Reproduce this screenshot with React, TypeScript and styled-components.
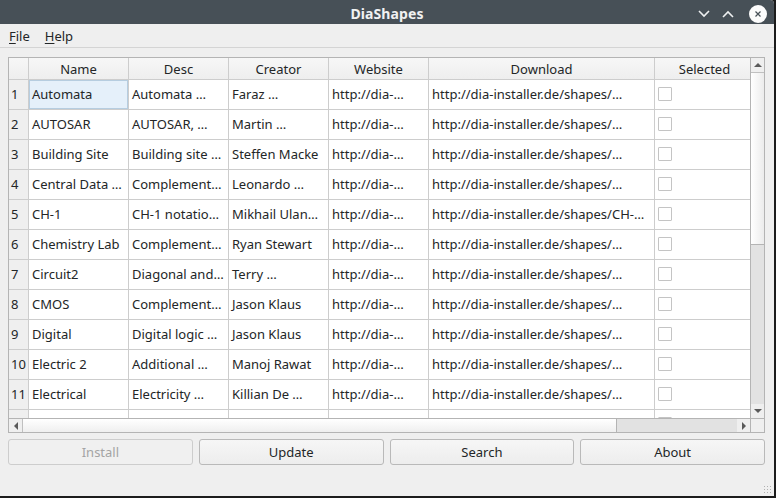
import React from "react";
import styled, { createGlobalStyle } from "styled-components";

const Global = createGlobalStyle`
  html, body { margin: 0; padding: 0; background: #1b1b1b; }
  body { font-family: "Noto Sans", "Open Sans", sans-serif; }
  * { box-sizing: border-box; }
`;

const Screen = styled.div`
  width: 776px;
  height: 498px;
  background: #1c1c1c;
  overflow: hidden;
`;

const Window = styled.div`
  width: 774px;
  height: 496px;
  background: #efefef;
  display: flex;
  flex-direction: column;
  border-top-right-radius: 4px;
  overflow: hidden;
  position: relative;
`;

const TitleBar = styled.div`
  height: 24px;
  flex: none;
  background: #475057;
  display: grid;
  grid-template-columns: 1fr auto 1fr;
  align-items: center;
  padding-top: 3px;
  color: #f0f1f2;
`;

const Title = styled.div`
  font-size: 14px;
  font-weight: 700;
  letter-spacing: 0.1px;
  grid-column: 2;
  line-height: 21px;
`;

const WinButtons = styled.div`
  grid-column: 3;
  justify-self: end;
  display: flex;
  align-items: center;
  gap: 10px;
  padding-right: 7px;
`;

const CloseDot = styled.div`
  width: 18px;
  height: 18px;
  border-radius: 50%;
  background: #fcfcfc;
  display: flex;
  align-items: center;
  justify-content: center;
  margin-left: 4px;
`;

const MenuBar = styled.div`
  height: 24px;
  flex: none;
  display: flex;
  align-items: center;
  gap: 15px;
  padding-left: 9px;
  border-bottom: 1px solid #d4d4d4;
  font-size: 13px;
  color: #232627;
`;

const MenuItem = styled.span`
  line-height: 20px;
`;

const Mnemonic = styled.span`
  text-decoration: underline;
  text-underline-offset: 2px;
`;

const Body = styled.div`
  padding: 9px 9px 0 8px;
  display: flex;
  flex-direction: column;
  gap: 6px;
`;

const TableFrame = styled.div`
  border: 1px solid #b4b4b4;
  display: grid;
  grid-template-columns: 741px 14px;
  grid-template-rows: 360px 14px;
  background: #fff;
`;

const Viewport = styled.div`
  overflow: hidden;
  background: #fff;
`;

const Grid = styled.div`
  display: grid;
  grid-template-columns: 20px 100px 100px 100px 100px 226px 100px;
  grid-auto-rows: 30px;
  grid-template-rows: 22px;
  width: 746px;
  font-size: 13px;
  color: #232627;
`;

const HeadCell = styled.div`
  background: linear-gradient(#f7f7f7, #eeeeee);
  border-right: 1px solid #cdcdcd;
  border-bottom: 1px solid #cdcdcd;
  display: flex;
  align-items: center;
  justify-content: center;
  white-space: nowrap;
  overflow: hidden;
`;

const RowHead = styled.div`
  background: #efefef;
  border-right: 1px solid #cdcdcd;
  border-bottom: 1px solid #cdcdcd;
  display: flex;
  align-items: center;
  padding: 0 0 2px 2px;
  white-space: nowrap;
  overflow: hidden;
`;

const Cell = styled.div<{ $selected?: boolean }>`
  background: ${(p) => (p.$selected ? "#e5f0fa" : "#ffffff")};
  border-right: 1px solid #cdcdcd;
  border-bottom: 1px solid #cdcdcd;
  ${(p) => (p.$selected ? "box-shadow: inset 0 0 0 1px #b6cde0;" : "")}
  display: flex;
  align-items: center;
  padding: 0 0 2px 3px;
  white-space: nowrap;
  overflow: hidden;
`;

const CheckCell = styled.div`
  background: #ffffff;
  border-right: 1px solid #cdcdcd;
  border-bottom: 1px solid #cdcdcd;
  display: flex;
  align-items: center;
  padding: 0 0 1px 3px;
`;

const Check = styled.div`
  width: 14px;
  height: 14px;
  border: 1px solid #c4c4c4;
  border-radius: 1px;
  background: #fff;
`;

const VScroll = styled.div`
  border-left: 1px solid #b4b4b4;
  background: #e2e2e2;
  display: flex;
  flex-direction: column;
`;

const HScroll = styled.div`
  border-top: 1px solid #b4b4b4;
  background: #e2e2e2;
  display: flex;
`;

const Corner = styled.div`
  border-top: 1px solid #b4b4b4;
  border-left: 1px solid #b4b4b4;
  background: #efefef;
`;

const Arrow = styled.div<{ $v?: boolean }>`
  flex: none;
  width: ${(p) => (p.$v ? "100%" : "13px")};
  height: ${(p) => (p.$v ? "14px" : "100%")};
  background: #efefef;
  display: flex;
  align-items: center;
  justify-content: center;
`;

const VThumb = styled.div`
  height: 173px;
  flex: none;
  background: linear-gradient(to right, #ffffff, #ececec);
  border-top: 1px solid #c0c0c0;
  border-bottom: 1px solid #b4b4b4;
`;

const HThumb = styled.div`
  width: 595px;
  flex: none;
  background: linear-gradient(#ffffff, #efefef);
  border-left: 1px solid #c0c0c0;
  border-right: 1px solid #b4b4b4;
`;

const Track = styled.div`
  flex: 1;
`;

const ButtonRow = styled.div`
  display: grid;
  grid-template-columns: repeat(4, 1fr);
  gap: 6px;
`;

const Button = styled.button`
  height: 26px;
  border: 1px solid #b9b9b9;
  border-radius: 3px;
  background: linear-gradient(#f6f6f6, #ededed);
  font-family: "Noto Sans", "Open Sans", sans-serif;
  font-size: 13px;
  color: #232627;
  padding: 0;
  &:disabled {
    color: #a4a4a4;
    border-color: #cdcdcd;
    background: #f0f0f0;
  }
`;

const Grip = styled.div`
  position: absolute;
  right: 1px;
  bottom: 1px;
  width: 10px;
  height: 10px;
  background-image: radial-gradient(#b0b0b0 0.8px, transparent 1px);
  background-size: 3px 3px;
`;

const rows: string[][] = [
  ["Automata", "Automata …", "Faraz …", "http://dia-…", "http://dia-installer.de/shapes/…"],
  ["AUTOSAR", "AUTOSAR, …", "Martin …", "http://dia-…", "http://dia-installer.de/shapes/…"],
  ["Building Site", "Building site …", "Steffen Macke", "http://dia-…", "http://dia-installer.de/shapes/…"],
  ["Central Data …", "Complement…", "Leonardo …", "http://dia-…", "http://dia-installer.de/shapes/…"],
  ["CH-1", "CH-1 notatio…", "Mikhail Ulan…", "http://dia-…", "http://dia-installer.de/shapes/CH-…"],
  ["Chemistry Lab", "Complement…", "Ryan Stewart", "http://dia-…", "http://dia-installer.de/shapes/…"],
  ["Circuit2", "Diagonal and…", "Terry …", "http://dia-…", "http://dia-installer.de/shapes/…"],
  ["CMOS", "Complement…", "Jason Klaus", "http://dia-…", "http://dia-installer.de/shapes/…"],
  ["Digital", "Digital logic …", "Jason Klaus", "http://dia-…", "http://dia-installer.de/shapes/…"],
  ["Electric 2", "Additional …", "Manoj Rawat", "http://dia-…", "http://dia-installer.de/shapes/…"],
  ["Electrical", "Electricity …", "Killian De …", "http://dia-…", "http://dia-installer.de/shapes/…"],
  ["", "", "", "", ""],
];

const headers = ["Name", "Desc", "Creator", "Website", "Download", "Selected"];

const Tri = ({ dir }: { dir: "up" | "down" | "left" | "right" }) => {
  const pts = {
    up: "0,5 4,1 8,5",
    down: "0,1 8,1 4,5",
    left: "5,0 5,8 1,4",
    right: "1,0 1,8 5,4",
  }[dir];
  const vert = dir === "up" || dir === "down";
  return (
    <svg width={vert ? 8 : 6} height={vert ? 6 : 8} viewBox={vert ? "0 0 8 6" : "0 0 6 8"}>
      <polygon points={pts} fill="#5a5a5a" />
    </svg>
  );
};

export default function App() {
  return (
    <Screen>
      <Global />
      <Window>
        <TitleBar>
          <Title>DiaShapes</Title>
          <WinButtons>
            <svg width="14" height="10" viewBox="0 0 14 10">
              <polyline points="2,2 7,7 12,2" fill="none" stroke="#eef0f1" strokeWidth="1.6" />
            </svg>
            <svg width="14" height="10" viewBox="0 0 14 10">
              <polyline points="2,8 7,3 12,8" fill="none" stroke="#eef0f1" strokeWidth="1.6" />
            </svg>
            <CloseDot>
              <svg width="8" height="8" viewBox="0 0 8 8">
                <path d="M1.5 1.5 L6.5 6.5 M6.5 1.5 L1.5 6.5" stroke="#475057" strokeWidth="1.2" />
              </svg>
            </CloseDot>
          </WinButtons>
        </TitleBar>
        <MenuBar>
          <MenuItem>
            <Mnemonic>F</Mnemonic>ile
          </MenuItem>
          <MenuItem>
            <Mnemonic>H</Mnemonic>elp
          </MenuItem>
        </MenuBar>
        <Body>
          <TableFrame>
            <Viewport>
              <Grid>
                <HeadCell />
                {headers.map((h) => (
                  <HeadCell key={h}>{h}</HeadCell>
                ))}
                {rows.map((r, i) => (
                  <React.Fragment key={i}>
                    <RowHead>{r[0] ? i + 1 : ""}</RowHead>
                    {r.map((c, j) => (
                      <Cell key={j} $selected={i === 0 && j === 0}>
                        {c}
                      </Cell>
                    ))}
                    <CheckCell>
                      <Check />
                    </CheckCell>
                  </React.Fragment>
                ))}
              </Grid>
            </Viewport>
            <VScroll>
              <Arrow $v>
                <Tri dir="up" />
              </Arrow>
              <VThumb />
              <Track />
              <Arrow $v>
                <Tri dir="down" />
              </Arrow>
            </VScroll>
            <HScroll>
              <Arrow>
                <Tri dir="left" />
              </Arrow>
              <HThumb />
              <Track />
              <Arrow>
                <Tri dir="right" />
              </Arrow>
            </HScroll>
            <Corner />
          </TableFrame>
          <ButtonRow>
            <Button disabled>Install</Button>
            <Button>Update</Button>
            <Button>Search</Button>
            <Button>About</Button>
          </ButtonRow>
        </Body>
        <Grip />
      </Window>
    </Screen>
  );
}
